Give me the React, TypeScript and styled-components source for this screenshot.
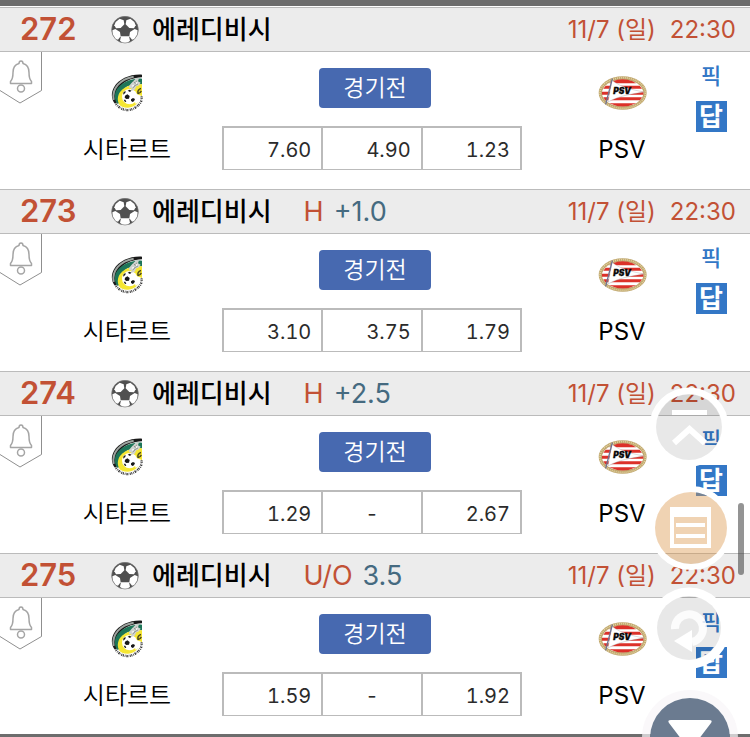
import React from "react";
import styled, { createGlobalStyle } from "styled-components";

const GlobalStyle = createGlobalStyle`
  * { box-sizing: border-box; }
  body {
    margin: 0;
    background: #fff;
    color: #111;
    font-family: Inter, "Noto Sans CJK KR", sans-serif;
    overflow: hidden;
  }
  button { font-family: inherit; cursor: pointer; }
`;

const Page = styled.main`
  width: 100%;
`;

const TopBar = styled.div`
  height: 7px;
  background: #6d6d6d;
  border-bottom: 1px solid #fff;
`;

const BottomBar = styled.div`
  height: 3px;
  background: #6d6d6d;
`;

const Match = styled.article`
  height: 182px;
  &:last-of-type { height: 181px; }
`;

const MatchHeader = styled.header`
  display: flex;
  align-items: center;
  height: 45px;
  padding: 0 14px 0 20px;
  background: #ececec;
  border-top: 1px solid #bbb;
  border-bottom: 1px solid #bbb;
  white-space: nowrap;
`;

const MatchNumber = styled.span`
  width: 91px;
  padding-bottom: 2px;
  font-size: 31px;
  font-weight: 600;
  line-height: 40px;
  color: #c25135;
`;

const League = styled.h2`
  margin: 0 32px 0 13px;
  font-size: 26px;
  font-weight: 500;
  line-height: 40px;
  color: #000;
`;

const BetType = styled.span`
  font-size: 27px;
  font-weight: 400;
  line-height: 40px;
  color: #c25135;
`;

const BetLine = styled(BetType)`
  margin-left: 10px;
  color: #456a80;
`;

const Kickoff = styled.time`
  display: flex;
  gap: 14px;
  margin-left: auto;
  font-size: 24px;
  font-weight: 400;
  line-height: 40px;
  color: #c25135;
`;

const MatchBody = styled.div`
  display: grid;
  grid-template-columns: 42px 170fr 360fr 100fr 78fr;
  align-items: start;
`;

const BellButton = styled.button`
  display: block;
  width: 42px;
  height: 52px;
  padding: 0;
  border: 0;
  background: none;
`;

const Team = styled.div`
  display: flex;
  flex-direction: column;
  align-items: center;
  padding-top: 22px;
`;

const TeamName = styled.span<{ $light?: boolean }>`
  margin-top: 20px;
  font-size: 24px;
  font-weight: ${(p) => (p.$light ? 350 : 400)};
  line-height: 36px;
  color: #000;
  white-space: nowrap;
`;

const OddsPanel = styled.div`
  display: flex;
  flex-direction: column;
  align-items: center;
  gap: 18px;
  padding: 16px 50px 0 10px;
`;

const StatusButton = styled.button`
  width: 112px;
  height: 40px;
  padding: 0;
  margin-left: 6px;
  border: 0;
  border-radius: 4px;
  background: #4769b0;
  color: #fff;
  font-size: 23px;
  font-weight: 350;
  line-height: 40px;
`;

const OddsTable = styled.table`
  width: 100%;
  height: 44px;
  table-layout: fixed;
  border-spacing: 0;
  border: solid #bbb;
  border-width: 2px 2px 1px 0;
`;

const OddsCell = styled.td<{ $empty: boolean }>`
  padding: ${(p) => (p.$empty ? "2px 0 0" : "2px 10px 0 0")};
  border-left: 2px solid #bbb;
  text-align: ${(p) => (p.$empty ? "center" : "right")};
  font-size: 20px;
  font-variant-numeric: tabular-nums;
  line-height: 38px;
  color: #2b2b2b;
`;

const Picks = styled.div`
  display: flex;
  flex-direction: column;
  align-items: center;
  gap: 10px;
  padding: 8px 0 0;
`;

const PickButton = styled.button<{ $filled?: boolean }>`
  width: 31px;
  height: 31px;
  padding: 0;
  border: 0;
  background: ${(p) => (p.$filled ? "#3377c6" : "transparent")};
  color: ${(p) => (p.$filled ? "#fff" : "#3377c6")};
  font-size: ${(p) => (p.$filled ? "26px" : "22px")};
  font-weight: ${(p) => (p.$filled ? 700 : 500)};
  line-height: 30px;
`;

const FloatingButton = styled.button<{ $top: number; $right: number; $size: number }>`
  position: fixed;
  top: ${(p) => p.$top}px;
  right: ${(p) => p.$right}px;
  width: ${(p) => p.$size}px;
  height: ${(p) => p.$size}px;
  padding: 0;
  border: 0;
  border-radius: 50%;
  background: none;
  svg { display: block; }
`;

const ScrollThumb = styled.div`
  position: fixed;
  top: 503px;
  right: 6px;
  width: 6px;
  height: 72px;
  border-radius: 3px;
  background: rgba(60, 60, 60, 0.55);
`;

function SoccerBall() {
  return (
    <svg width="28" height="28" viewBox="0 0 84 84" aria-hidden="true">
      <circle cx="42" cy="41" r="40" fill="#505050" />
      <g fill="#fff">
        <path d="M14 18 26 8l12 5 2 12-11 11-14 1-5-9z" />
        <path d="m70 18-12-10-12 5-2 12 11 11 14 1 5-9z" />
        <path d="m4 43 9-4 14 9 2 13-8 10-8-2C6 61 3 52 4 43z" />
        <path d="m80 43-9-4-14 9-2 13 8 10 8-2c7-8 10-17 9-26z" />
        <path d="M30 61h24l3 13-7 7H34l-7-7z" />
      </g>
      <circle cx="42" cy="41" r="40" fill="none" stroke="#777" strokeWidth="2" />
    </svg>
  );
}

function Bell() {
  return (
    <svg width="42" height="52" viewBox="0 0 42 52" fill="none" aria-hidden="true">
      <path d="M41.500 0V38.500L20 51 0 38.500" stroke="#8f8f8f" />
      <g stroke="#a5a5a5" strokeWidth="1.500" strokeLinejoin="round">
        <path d="M19 11.500c0-3.500 4-3.500 4 0 4 1 6 4.500 6 9 0 5 1 7.500 2.500 9v2h-21v-2c1.500-1.500 2.500-4 2.500-9 0-4.500 2-8 6-9z" />
        <circle cx="21" cy="36.500" r="3.500" />
      </g>
    </svg>
  );
}

function SittardCrest() {
  return (
    <svg width="32" height="38" viewBox="0 0 96 114" role="img" aria-label="Fortuna Sittard">
      <path d="M93 2C58 0 24 14 9 40-1 58 1 76 12 89l12-8C14 66 18 48 30 35 45 19 68 11 93 10z" fill="#191919" />
      <path d="M8 78C2 44 27 15 68 8" fill="none" stroke="#9da39f" strokeWidth="6" />
      <path d="M93 14C58 12 27 27 14 52c-5 14-3 27 5 38l14-7C25 67 30 52 43 41c14-9 30-10 50-10z" fill="#1d7558" />
      <path d="M93 31C62 29 37 38 25 57c-7 14-6 28 3 39 14 14 37 13 53-1l12-30z" fill="#f5e633" />
      <path d="M90 43c-8 2-11 9-9 16 5-1 8-3 10-8" fill="#d9c930" stroke="#45421b" strokeWidth="4" />
      <circle cx="56" cy="68" r="23" fill="#fff" />
      <path d="M64 55 92 66 86 82 74 90z" fill="#fff" />
      <path d="m62 26 11-11 11-2-3 9 8 4-7 9-6 2-5 10-11 4 1-9-8 1 4-11z" fill="#d0d3d0" />
      <path d="m68 23 6 6m3-9-5 10m9 0-13 7m-3 5 6-5" stroke="#707870" strokeWidth="2" />
      <path d="m72 27 8-4-3 7zm-10 8 8-3-4 7z" fill="#fff" />
      <g fill="#171717">
        <path d="m42 65 7-4 7 5-2 8-8 1-5-4z" />
        <path d="m36 62 2-8 6-3-1 6zm14-12 6-3 5 3-4 4zm10 26 6-4 6 3-3 7-5 2-4-4zm-22 1 5 0 3 6-4 1z" />
      </g>
      <path d="M16 92C36 113 67 111 86 88 91 80 92 75 91 67" fill="none" stroke="#fff" strokeWidth="11" />
      <path d="M15 90C36 116 67 113 87 88 92 80 93 74 91 67" fill="none" stroke="#333" strokeWidth="7" strokeDasharray="3 3 2 3 4 2 1 3 3 2" />
    </svg>
  );
}

function PsvCrest() {
  return (
    <svg width="50" height="38" viewBox="0 0 150 114" role="img" aria-label="PSV Eindhoven">
      <ellipse cx="77" cy="57" rx="72" ry="50" fill="#bfa66d" />
      <ellipse cx="77" cy="57" rx="68" ry="46" fill="none" stroke="#e2d2a2" strokeWidth="5" strokeDasharray="3 3" />
      <ellipse cx="77" cy="57" rx="62" ry="40" fill="#fff" />
      <g fill="#dc3129">
        <path d="M47 22q30-12 60 0l10 6H37z" />
        <path d="M26 35h102l7 9H19zM15 53h124v9H15zM19 70h116l-6 9H25zM36 88h82q-40 19-82 0z" />
      </g>
      <path d="M45 19c28 21 55 27 96 35-39 6-77 12-108 30z" fill="#fff" stroke="#999" strokeWidth="1" />
      <path d="M46 14 26 91" stroke="#6e7290" strokeWidth="4" />
      <text x="49" y="60" fill="#080808" stroke="#080808" strokeWidth="1" fontFamily="Inter, sans-serif" fontSize="25" fontWeight="900" fontStyle="italic">PSV</text>
    </svg>
  );
}

type Game = { number: string; type?: string; line?: string; odds: string[] };

const games: Game[] = [
  { number: "272", odds: ["7.60", "4.90", "1.23"] },
  { number: "273", type: "H", line: "+1.0", odds: ["3.10", "3.75", "1.79"] },
  { number: "274", type: "H", line: "+2.5", odds: ["1.29", "-", "2.67"] },
  { number: "275", type: "U/O", line: "3.5", odds: ["1.59", "-", "1.92"] },
];

function MatchRow({ game }: { game: Game }) {
  return (
    <Match>
      <MatchHeader>
        <MatchNumber>{game.number}</MatchNumber>
        <SoccerBall />
        <League>에레디비시</League>
        {game.type && <BetType>{game.type}</BetType>}
        {game.line && <BetLine>{game.line}</BetLine>}
        <Kickoff><span>11/7 (일)</span><span>22:30</span></Kickoff>
      </MatchHeader>
      <MatchBody>
        <BellButton aria-label="알림"><Bell /></BellButton>
        <Team><SittardCrest /><TeamName $light>시타르트</TeamName></Team>
        <OddsPanel>
          <StatusButton>경기전</StatusButton>
          <OddsTable>
            <tbody>
              <tr>
                {game.odds.map((odd, i) => <OddsCell key={i} $empty={odd === "-"}>{odd}</OddsCell>)}
              </tr>
            </tbody>
          </OddsTable>
        </OddsPanel>
        <Team><PsvCrest /><TeamName>PSV</TeamName></Team>
        <Picks>
          <PickButton>픽</PickButton>
          <PickButton $filled>답</PickButton>
        </Picks>
      </MatchBody>
    </Match>
  );
}

export default function App() {
  return (
    <>
      <GlobalStyle />
      <Page>
        <TopBar />
        {games.map((game) => <MatchRow key={game.number} game={game} />)}
        <BottomBar />
      </Page>
      <ScrollThumb />
      <FloatingButton $top={387} $right={21} $size={80} aria-label="맨 위로">
        <svg width="80" height="80" viewBox="0 0 80 80" fill="none">
          <circle cx="40" cy="40" r="36" stroke="#fff" strokeWidth="7" />
          <circle cx="40" cy="40" r="33" fill="#000" fillOpacity="0.09" />
          <path d="M23 25.500h35" stroke="#fff" strokeWidth="5" />
          <path d="m25 56 15.500-14L56 56" stroke="#fff" strokeWidth="6" />
        </svg>
      </FloatingButton>
      <FloatingButton $top={486} $right={17} $size={84} aria-label="목록">
        <svg width="84" height="84" viewBox="0 0 84 84" fill="none">
          <circle cx="42" cy="42" r="39" stroke="#fff" strokeWidth="6" />
          <circle cx="42" cy="42" r="36" fill="#dc9749" fillOpacity="0.42" />
          <path fillRule="evenodd" d="M21 21h41v41H21zM25 31v27h33V31z" fill="#fff" />
          <path d="M27 39h29M27 50h29" stroke="#fff" strokeWidth="4" />
        </svg>
      </FloatingButton>
      <FloatingButton $top={586} $right={19} $size={84} aria-label="새로고침">
        <svg width="84" height="84" viewBox="0 0 84 84" fill="none">
          <circle cx="42" cy="42" r="36" stroke="#fff" strokeWidth="9" />
          <circle cx="42" cy="42" r="32" fill="#000" fillOpacity="0.09" />
          <path d="M28 43a14 14 0 1 1 17 13" stroke="#fff" strokeOpacity="0.85" strokeWidth="8" />
          <path d="m27 55 18-11v22z" fill="#fff" />
        </svg>
      </FloatingButton>
      <FloatingButton $top={689} $right={11} $size={98} aria-label="아래로">
        <svg width="98" height="98" viewBox="0 0 98 98" fill="none">
          <circle cx="49" cy="49" r="44" stroke="#f8f5f8" strokeOpacity="0.7" strokeWidth="8" />
          <circle cx="49" cy="49" r="40" fill="#6b7b90" />
          <path d="M30 31h38q4 0 2 3L51 59q-2 3-4 0L28 34q-2-3 2-3z" fill="#fff" />
        </svg>
      </FloatingButton>
    </>
  );
}
